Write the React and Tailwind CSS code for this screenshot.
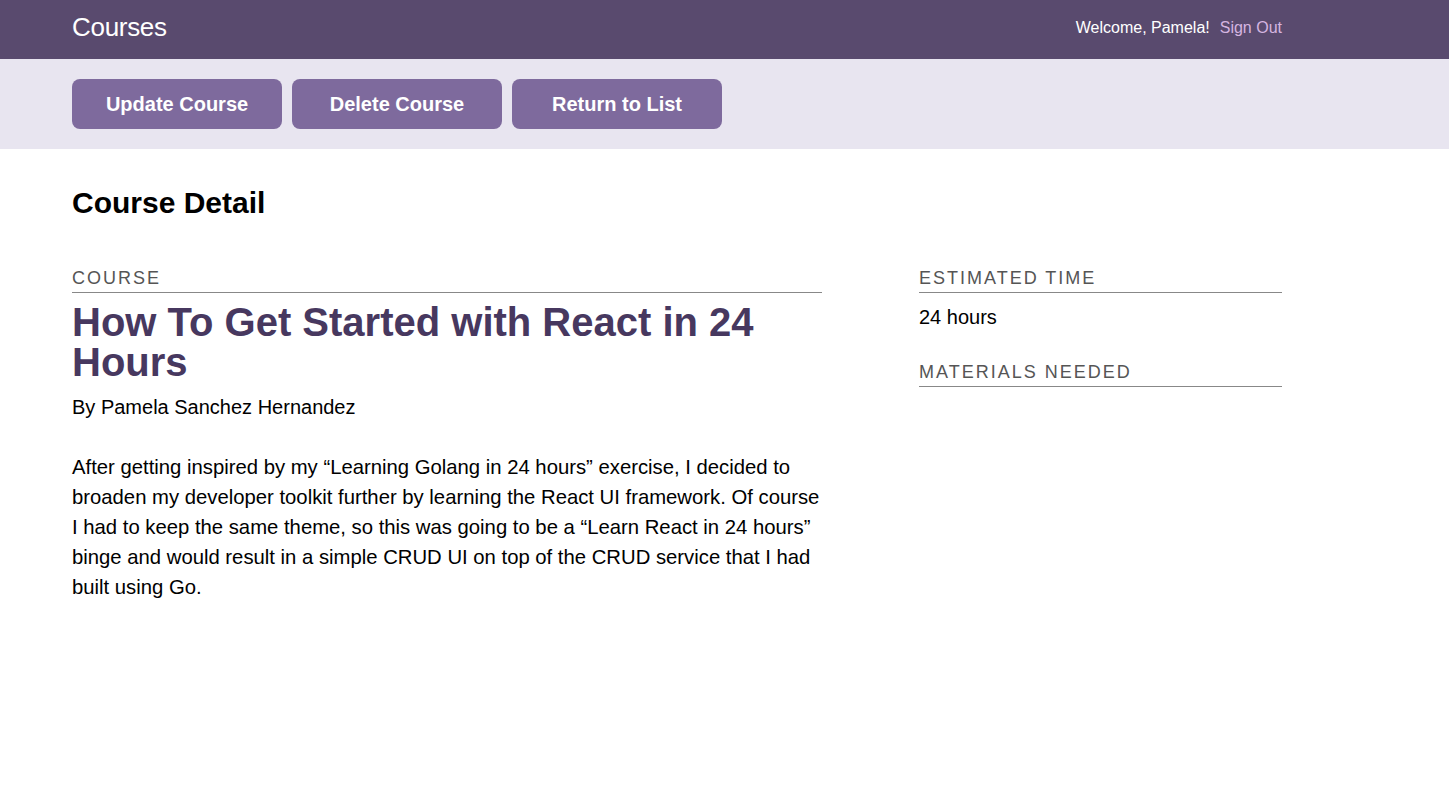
// App.jsx

const font = { fontFamily: '"Liberation Sans", Arial, Helvetica, sans-serif' };

function Header() {
  return (
    <header className="bg-[#594a6e] text-white h-[59px]">
      <div className="ml-[72px] w-[1210px] h-full pb-[5px] flex justify-between items-center">
        <span className="text-[26px] tracking-[-0.3px]">Courses</span>
        <div className="flex items-center gap-[10px] text-[16px] pt-[1px]">
          <span>Welcome, Pamela!</span>
          <a href="#" className="text-[#d5b5e0]">Sign Out</a>
        </div>
      </div>
    </header>
  );
}

function ActionBar() {
  const buttons = ["Update Course", "Delete Course", "Return to List"];
  return (
    <div className="bg-[#e8e5f0] py-[20px]">
      <div className="ml-[72px] w-[1210px] flex gap-[10px]">
        {buttons.map((b) => (
          <button
            key={b}
            className="w-[210px] h-[50px] rounded-[8px] bg-[#7e6a9d] text-white font-bold text-[20px]"
          >
            {b}
          </button>
        ))}
      </div>
    </div>
  );
}

function Label({ children }) {
  return (
    <h3 className="text-[18px] leading-[20px] tracking-[2px] uppercase text-[#555] pb-[4px] border-b border-[#888]">
      {children}
    </h3>
  );
}

function App() {
  return (
    <div className="min-h-screen bg-white text-black" style={font}>
      <Header />
      <ActionBar />
      <main className="ml-[72px] w-[1210px]">
        <h2 className="text-[30px] font-bold mt-[38px] leading-[32px]">Course Detail</h2>
        <div className="flex gap-[97px] mt-[49px]">
          <div className="w-[750px]">
            <Label>Course</Label>
            <h3 className="text-[40px] leading-[40px] font-bold text-[#47385f] mt-[9px]">
              How To Get Started with React in 24 Hours
            </h3>
            <p className="text-[20px] mt-[10px]">By Pamela Sanchez Hernandez</p>
            <p className="text-[20.3px] leading-[30px] mt-[30px] whitespace-nowrap">
              After getting inspired by my “Learning Golang in 24 hours” exercise, I decided to
              <br />
              broaden my developer toolkit further by learning the React UI framework. Of course
              <br />
              I had to keep the same theme, so this was going to be a “Learn React in 24 hours”
              <br />
              binge and would result in a simple CRUD UI on top of the CRUD service that I had
              <br />
              built using Go.
            </p>
          </div>
          <div className="w-[363px]">
            <Label>Estimated Time</Label>
            <p className="text-[20px] mt-[9px]">24 hours</p>
            <div className="mt-[30px]">
              <Label>Materials Needed</Label>
            </div>
          </div>
        </div>
      </main>
    </div>
  );
}

export default App;
